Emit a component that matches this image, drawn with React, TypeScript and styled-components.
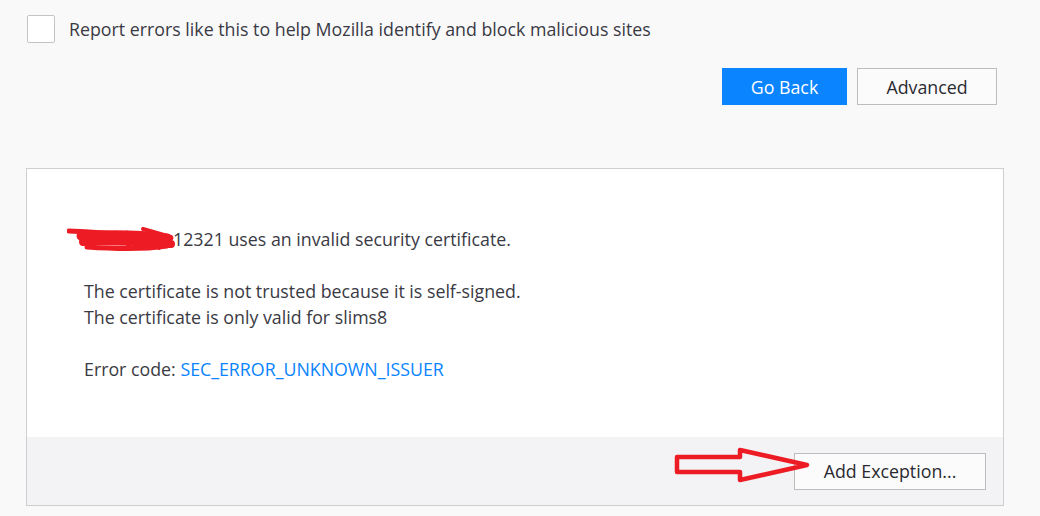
import React from "react";
import styled, { createGlobalStyle } from "styled-components";

const Global = createGlobalStyle`
  html, body { margin: 0; padding: 0; background: #f9f9fa; }
  body { font-family: "Open Sans", "Noto Sans", sans-serif; color: #333; }
`;

const Page = styled.div`
  width: 1040px;
  height: 516px;
  box-sizing: border-box;
  padding: 15px 37px 0 26px;
  display: flex;
  flex-direction: column;
  overflow: hidden;
`;

const CheckRow = styled.label`
  display: flex;
  align-items: center;
  gap: 14px;
  margin-left: 1px;
  height: 28px;
  font-size: 17.8px;
  color: #3a3a44;
`;

const Box = styled.span`
  width: 26px;
  height: 26px;
  border: 1px solid #c4c4c4;
  border-radius: 2px;
  background: #fff;
  flex: none;
`;

const Actions = styled.div`
  display: flex;
  justify-content: flex-end;
  gap: 10px;
  margin-top: 25px;
  padding-right: 6px;
`;

const Button = styled.button<{ $primary?: boolean; $w: number }>`
  width: ${(p) => p.$w}px;
  height: 37px;
  box-sizing: border-box;
  font-family: inherit;
  font-size: 17.8px;
  border-radius: 0;
  border: 1px solid ${(p) => (p.$primary ? "#0a84ff" : "#bdbdbd")};
  background: ${(p) => (p.$primary ? "#0a84ff" : "#fbfbfb")};
  color: ${(p) => (p.$primary ? "#fff" : "#2a2a30")};
  padding: 0;
`;

const Panel = styled.div`
  margin-top: 63px;
  width: 978px;
  height: 338px;
  box-sizing: border-box;
  border: 1px solid #cfcfd1;
  background: #fff;
  display: flex;
  flex-direction: column;
`;

const Body = styled.div`
  flex: 1;
  padding: 57px 0 0 40px;
  font-size: 17.8px;
  color: #3a3a44;
`;

const Title = styled.p`
  margin: 0 0 26px;
  line-height: 26px;
  display: flex;
  align-items: center;
`;

const Scribble = styled.span`
  display: inline-block;
  width: 106px;
  height: 26px;
  flex: none;
`;

const Para = styled.p`
  margin: 0 0 26px 17px;
  line-height: 26px;
`;

const Code = styled.span`
  color: #0a84ff;
`;

const Footer = styled.div`
  height: 68px;
  flex: none;
  background: #f3f3f5;
  display: flex;
  align-items: center;
  justify-content: flex-end;
  padding-right: 17px;
`;

const Arrow = styled.svg`
  width: 138px;
  height: 36px;
  margin-right: -18px;
  margin-top: -13px;
  position: relative;
  z-index: 1;
`;

export default function App() {
  return (
    <>
      <Global />
      <Page>
        <CheckRow>
          <Box />
          Report errors like this to help Mozilla identify and block malicious sites
        </CheckRow>
        <Actions>
          <Button $primary $w={125}>Go Back</Button>
          <Button $w={140}>Advanced</Button>
        </Actions>
        <Panel>
          <Body>
            <Title>
              <Scribble>
                <svg width="110" height="26" viewBox="0 0 110 26">
                  <g stroke="#ed1c24" strokeLinecap="round" strokeLinejoin="round" fill="none">
                    <path d="M2 5 C 30 6, 60 9, 104 12" strokeWidth="5" />
                    <path d="M14 10 C 40 8, 70 8, 100 12" strokeWidth="9" />
                    <path d="M16 16 C 40 14, 70 16, 104 18" strokeWidth="8" />
                    <path d="M20 21 C 50 23, 80 23, 100 20" strokeWidth="5" />
                    <path d="M76 3 L 104 11 L 92 22" strokeWidth="4" />
                    <path d="M60 6 L 70 14 L 58 22" strokeWidth="3" />
                  </g>
                </svg>
              </Scribble>
              12321 uses an invalid security certificate.
            </Title>
            <Para>
              The certificate is not trusted because it is self-signed.
              <br />
              The certificate is only valid for slims8
            </Para>
            <Para>
              Error code: <Code>SEC_ERROR_UNKNOWN_ISSUER</Code>
            </Para>
          </Body>
          <Footer>
            <Arrow viewBox="0 0 138 36">
              <path
                d="M3 10 L 66 10 L 66 3 L 133 18 L 66 33 L 66 25 L 3 25 Z"
                fill="none"
                stroke="#ed1c24"
                strokeWidth="4.5"
                strokeLinejoin="round"
              />
            </Arrow>
            <Button $w={192}>Add Exception...</Button>
          </Footer>
        </Panel>
      </Page>
    </>
  );
}
